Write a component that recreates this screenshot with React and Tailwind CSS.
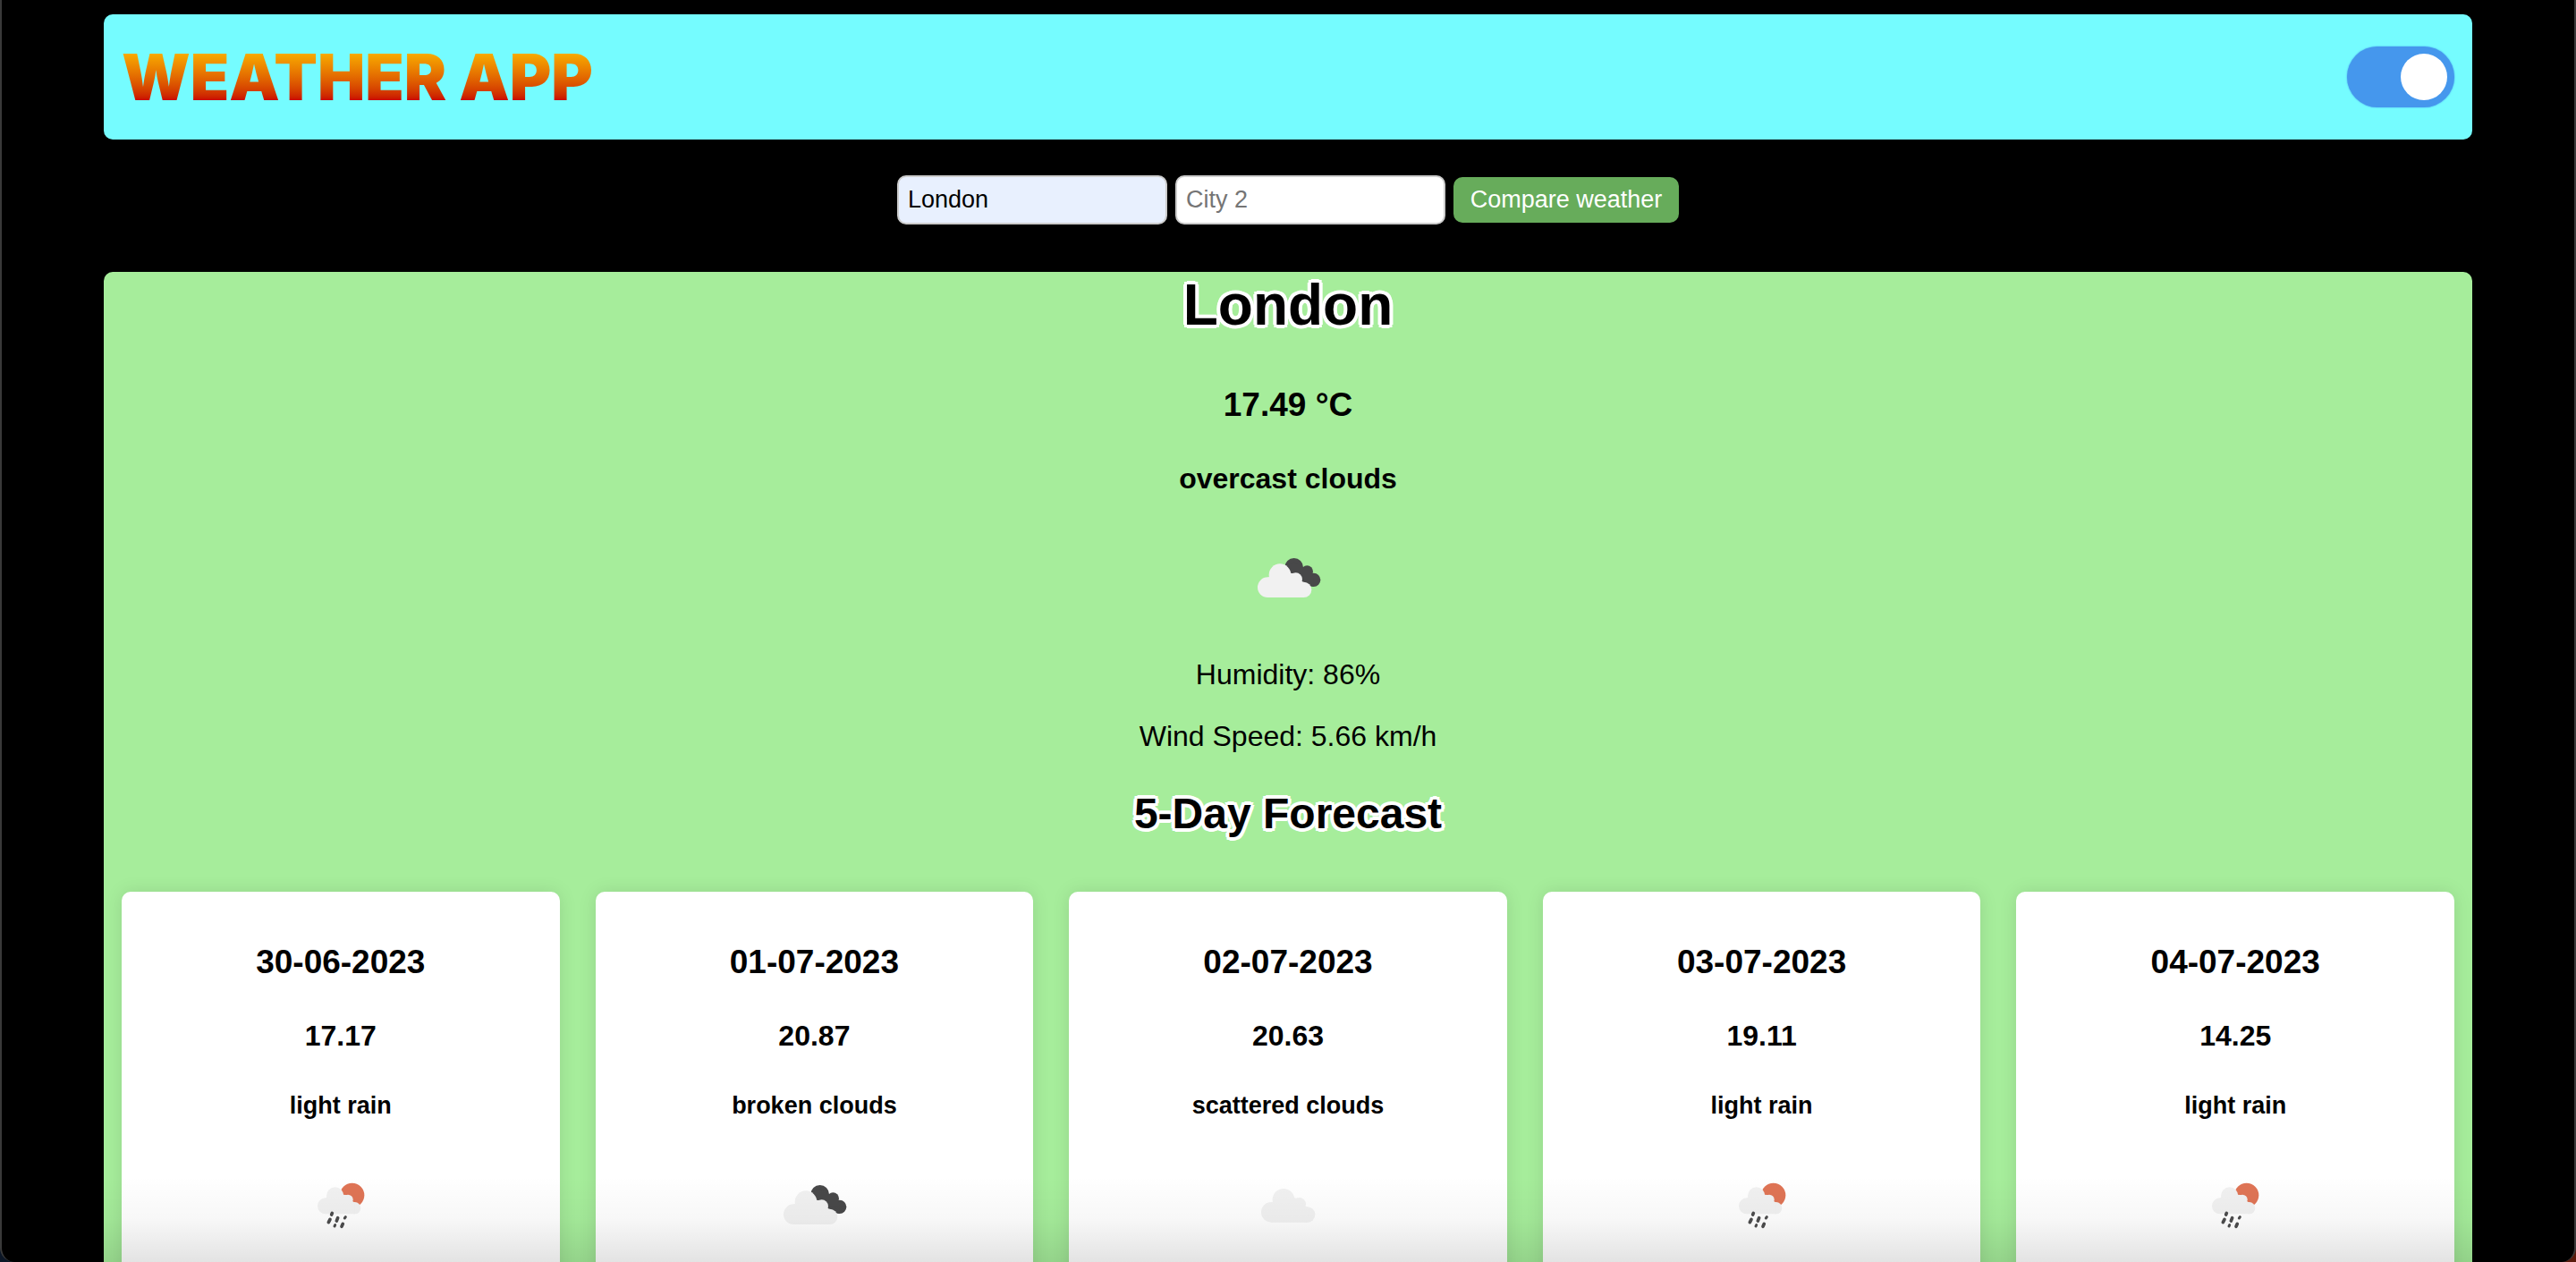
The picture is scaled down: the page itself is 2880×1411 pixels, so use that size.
import React, { useState } from "react";

const forecast = [
  { date: "30-06-2023", temp: "17.17", text: "light rain", icon: "rain" },
  { date: "01-07-2023", temp: "20.87", text: "broken clouds", icon: "broken" },
  { date: "02-07-2023", temp: "20.63", text: "scattered clouds", icon: "cloud" },
  { date: "03-07-2023", temp: "19.11", text: "light rain", icon: "rain" },
  { date: "04-07-2023", temp: "14.25", text: "light rain", icon: "rain" },
];

const outline =
  "[text-shadow:4px_0_0_#fff,-4px_0_0_#fff,0_4px_0_#fff,0_-4px_0_#fff,3px_3px_0_#fff,-3px_3px_0_#fff,3px_-3px_0_#fff,-3px_-3px_0_#fff]";

function CloudShape() {
  return (
    <g fill="#f1f1f1">
      <circle cx="82" cy="170" r="34" />
      <circle cx="123" cy="128" r="37" />
      <circle cx="176" cy="143" r="22" />
      <circle cx="203" cy="178" r="26" />
      <path d="M82 204V137L90 134L120 100L158 122L172 124L197 150L210 156L203 204Z" />
    </g>
  );
}

function WeatherIcon({ kind, label }) {
  return (
    <svg viewBox="0 0 300 270" className="h-[90px] w-[100px]" role="img" aria-label={label}>
      {kind === "broken" && (
        <>
          <g fill="#484849">
            <circle cx="170" cy="103" r="31" />
            <circle cx="214" cy="117" r="20" />
            <circle cx="236" cy="145" r="23" />
            <path d="M140 100L170 85L199 103L214 105L232 124L236 145L236 168L200 160Z" />
          </g>
          <CloudShape />
        </>
      )}
      {kind === "cloud" && (
        <g transform="translate(12 -7)">
          <CloudShape />
        </g>
      )}
      {kind === "rain" && (
        <>
          <circle cx="188" cy="106" r="41" fill="#df7455" />
          <g fill="#f1f1f1">
            <circle cx="99" cy="142" r="27" />
            <circle cx="131" cy="108" r="29" />
            <circle cx="174" cy="121" r="17" />
            <circle cx="197" cy="149" r="20" />
            <path d="M99 169V116L104 112L131 85L158 104L174 106L192 128L197 130V169Z" />
          </g>
          <g stroke="#4c4c4d" strokeLinecap="round" strokeWidth="11">
            <path d="M121 166L119 171" />
            <path d="M114 187L109 197" />
            <path d="M140 182L136 192" />
            <path d="M157 202L153 211" />
            <path strokeWidth="9" d="M166 179L163 183" />
            <path strokeWidth="9" d="M131 206L129 210" />
          </g>
        </>
      )}
    </svg>
  );
}

function Header() {
  const [dark, setDark] = useState(true);
  return (
    <header className="flex h-[140px] items-center justify-between rounded-[10px] bg-[#75fcff] px-5">
      <h1 className="bg-linear-to-b from-[#f7ab00] from-20% to-[#c90000] to-80% bg-clip-text font-[Inter] text-[71px] leading-[88px] font-black text-transparent">
        WEATHER APP
      </h1>
      <label className="relative block h-[68px] w-[120px] cursor-pointer">
        <input
          type="checkbox"
          aria-label="Dark mode"
          checked={dark}
          onChange={(e) => setDark(e.target.checked)}
          className="peer absolute inset-0 size-full cursor-pointer appearance-none rounded-full bg-[#ccc] shadow-[0_0_2px_#4597ed] checked:bg-[#4597ed]"
        />
        <span className="pointer-events-none absolute top-2 left-2 size-[52px] rounded-full bg-white peer-checked:right-2 peer-checked:left-auto" />
      </label>
    </header>
  );
}

function CompareForm() {
  const [first, setFirst] = useState("London");
  const [second, setSecond] = useState("");
  const field =
    "h-[55px] w-[302px] rounded-[10px] border-2 border-[#ccc] px-[10px] text-[27px] text-black outline-none placeholder:text-[#757575]";
  return (
    <form
      onSubmit={(e) => e.preventDefault()}
      className="mt-10 flex items-center justify-center gap-[9px]"
    >
      <input
        type="text"
        aria-label="City 1"
        placeholder="City 1"
        value={first}
        onChange={(e) => setFirst(e.target.value)}
        className={field + " bg-[#e8f0fe]"}
      />
      <input
        type="text"
        aria-label="City 2"
        placeholder="City 2"
        value={second}
        onChange={(e) => setSecond(e.target.value)}
        className={field + " bg-white"}
      />
      <button
        type="submit"
        className="h-[51px] w-[252px] cursor-pointer rounded-[10px] bg-[#67ac5b] text-[27px] whitespace-nowrap text-white"
      >
        Compare weather
      </button>
    </form>
  );
}

function DayCard({ day }) {
  return (
    <article className="flex flex-col items-center rounded-[10px] bg-white pt-[57px] pb-14 shadow-[0_0_20px_rgba(0,0,0,0.1)]">
      <h3 className="text-[37px] leading-[43px] font-bold">{day.date}</h3>
      <h4 className="mt-[43px] text-[32px] leading-[37px] font-bold">{day.temp}</h4>
      <h5 className="mt-11 mb-[49px] text-[27px] leading-[31px] font-bold">{day.text}</h5>
      <WeatherIcon kind={day.icon} label={day.text} />
    </article>
  );
}

export default function App() {
  return (
    <div className="h-screen bg-linear-to-r from-[#0b1626] to-[#5a1a0c]">
      <div className="relative h-full overflow-hidden rounded-b-[16px] border-x-2 border-[#3a3a3a] bg-black px-[114px] pt-4 font-['Liberation_Sans',Arial,sans-serif] text-black">
        <Header />
        <CompareForm />
        <main className="mt-[53px] flex flex-col items-center rounded-[10px] bg-[#a6ed9b] pb-10">
          <h2 className={"text-[64px] leading-[74px] font-bold " + outline}>London</h2>
          <h3 className="mt-[53px] text-[37px] leading-[43px] font-bold">17.49 °C</h3>
          <h4 className="mt-[43px] mb-[46px] text-[32px] leading-[37px] font-bold">
            overcast clouds
          </h4>
          <WeatherIcon kind="broken" label="overcast clouds" />
          <p className="mt-[46px] text-[32px] leading-[37px]">Humidity: 86%</p>
          <p className="mt-8 text-[32px] leading-[37px]">Wind Speed: 5.66 km/h</p>
          <h2 className={"mt-10 text-[48px] leading-[55px] font-bold " + outline}>
            5-Day Forecast
          </h2>
          <section className="mt-[60px] grid w-full grid-cols-5 gap-10 px-5">
            {forecast.map((day) => (
              <DayCard key={day.date} day={day} />
            ))}
          </section>
        </main>
        <div className="pointer-events-none absolute inset-x-0 bottom-0 h-24 bg-linear-to-b from-black/0 via-black/3 to-black/11" />
      </div>
    </div>
  );
}
